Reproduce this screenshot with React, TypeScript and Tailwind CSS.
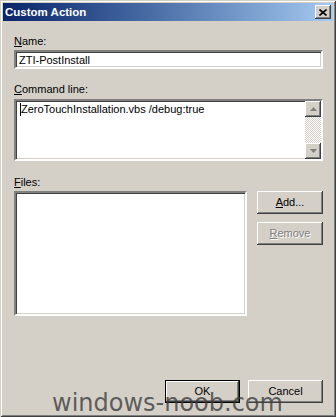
import React from "react";

const sunken =
  "border-2 border-t-[#808080] border-l-[#808080] border-b-white border-r-white shadow-[inset_1px_1px_0_#404040,inset_-1px_-1px_0_#d4d0c8] bg-white";

const raised =
  "bg-[#d4d0c8] shadow-[inset_-1px_-1px_0_#404040,inset_1px_1px_0_#ffffff,inset_-2px_-2px_0_#808080,inset_2px_2px_0_#d4d0c8]";

function Arrow({ up }: { up?: boolean }) {
  return (
    <svg width="7" height="4" viewBox="0 0 7 4" className="block">
      {up ? (
        <polygon points="3.5,0 7,4 0,4" fill="#808080" />
      ) : (
        <polygon points="0,0 7,0 3.5,4" fill="#808080" />
      )}
    </svg>
  );
}

function ScrollBtn({ up }: { up?: boolean }) {
  return (
    <div className={`${raised} w-[16px] h-[16px] flex items-center justify-center`}>
      <Arrow up={up} />
    </div>
  );
}

export default function App() {
  return (
    <div
      className="relative w-[336px] h-[417px] bg-[#d4d0c8] p-[3px] flex flex-col overflow-hidden shadow-[inset_1px_1px_0_#d4d0c8,inset_-1px_-1px_0_#404040,inset_2px_2px_0_#ffffff,inset_-2px_-2px_0_#808080] text-black text-[11px] leading-[13px]"
      style={{ fontFamily: '"Liberation Sans", Arial, sans-serif' }}
    >
      {/* Title bar */}
      <div className="h-[18px] bg-linear-to-r from-[#0a246a] to-[#a6caf0] flex items-center justify-between pl-[2px] pr-[2px]">
        <span className="text-white font-bold text-[11.5px] leading-[13px]">Custom Action</span>
        <div className={`${raised} w-[16px] h-[14px] flex items-center justify-center`}>
          <svg width="8" height="7" viewBox="0 0 8 7" className="block">
            <path d="M0.5 0.5 L7.5 6.5 M7.5 0.5 L0.5 6.5" stroke="#000" strokeWidth="1.6" />
          </svg>
        </div>
      </div>

      {/* Body */}
      <div className="flex-1 flex flex-col pl-[11px] pr-[10px] pb-[11px]">
        <div className="mt-[14px]">
          <span className="underline">N</span>ame:
        </div>
        <div className={`${sunken} mt-[2px] h-[19px] flex items-center pl-[3px] pt-[1px]`}>
          ZTI-PostInstall
        </div>

        <div className="mt-[14px]">
          <span className="underline">C</span>ommand line:
        </div>
        <div className={`${sunken} mt-[3px] h-[62px] flex`}>
          <div className="flex-1 pl-[5px] pt-[2px] relative">
            <span className="absolute left-[4px] top-[2px] w-px h-[13px] bg-black" />
            ZeroTouchInstallation.vbs /debug:true
          </div>
          <div className="w-[16px] flex flex-col bg-[repeating-conic-gradient(#ffffff_0_25%,#d4d0c8_0_50%)] bg-[length:2px_2px]">
            <ScrollBtn up />
            <div className="flex-1" />
            <ScrollBtn />
          </div>
        </div>

        <div className="mt-[15px]">
          <span className="underline">F</span>iles:
        </div>
        <div className="mt-[2px] flex">
          <div className={`${sunken} w-[233px] h-[125px]`} />
          <div className="ml-[10px] flex flex-col gap-[8px]">
            <div className={`${raised} w-[66px] h-[23px] flex items-center justify-center`}>
              <span>
                <span className="underline">A</span>dd...
              </span>
            </div>
            <div className={`${raised} w-[66px] h-[23px] flex items-center justify-center`}>
              <span className="text-[#808080] [text-shadow:1px_1px_0_#ffffff]">
                <span className="underline">R</span>emove
              </span>
            </div>
          </div>
        </div>

        <div className="mt-auto flex justify-end gap-[8px]">
          <div className="w-[75px] h-[23px] border border-black">
            <div className={`${raised} w-full h-full flex items-center justify-center`}>OK</div>
          </div>
          <div className={`${raised} w-[75px] h-[23px] flex items-center justify-center`}>Cancel</div>
        </div>
      </div>

      {/* Watermark */}
      <div
        className="absolute left-[52px] top-[391px] text-[24px] leading-[24px] text-[#3c3c3c]/80 whitespace-nowrap pointer-events-none"
        style={{ fontFamily: '"DejaVu Sans", Verdana, sans-serif' }}
      >
        windows-noob.com
      </div>
    </div>
  );
}
